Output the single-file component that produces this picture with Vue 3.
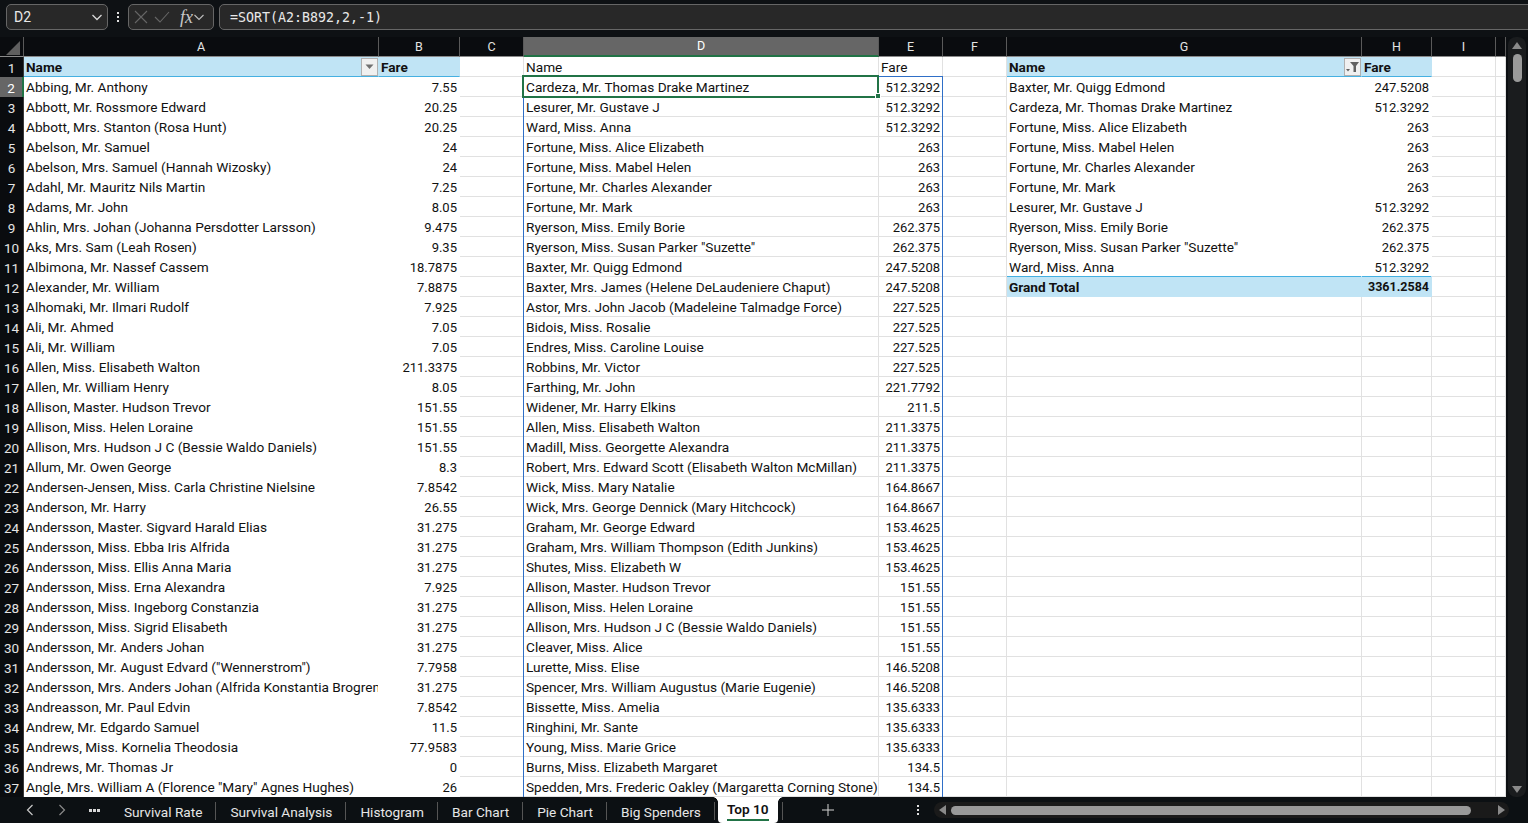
<script setup>
const columns = [
  { key: 'A', w: 355 }, { key: 'B', w: 81 }, { key: 'C', w: 64 }, { key: 'D', w: 355, active: true },
  { key: 'E', w: 64 }, { key: 'F', w: 64 }, { key: 'G', w: 355 }, { key: 'H', w: 70 }, { key: 'I', w: 64 }, { key: '', w: 10 },
]
const gridCols = '24px ' + columns.map(c => c.w + 'px').join(' ')

const source = [
  ['Abbing, Mr. Anthony', '7.55'], ['Abbott, Mr. Rossmore Edward', '20.25'], ['Abbott, Mrs. Stanton (Rosa Hunt)', '20.25'],
  ['Abelson, Mr. Samuel', '24'], ['Abelson, Mrs. Samuel (Hannah Wizosky)', '24'], ['Adahl, Mr. Mauritz Nils Martin', '7.25'],
  ['Adams, Mr. John', '8.05'], ['Ahlin, Mrs. Johan (Johanna Persdotter Larsson)', '9.475'], ['Aks, Mrs. Sam (Leah Rosen)', '9.35'],
  ['Albimona, Mr. Nassef Cassem', '18.7875'], ['Alexander, Mr. William', '7.8875'], ['Alhomaki, Mr. Ilmari Rudolf', '7.925'],
  ['Ali, Mr. Ahmed', '7.05'], ['Ali, Mr. William', '7.05'], ['Allen, Miss. Elisabeth Walton', '211.3375'],
  ['Allen, Mr. William Henry', '8.05'], ['Allison, Master. Hudson Trevor', '151.55'], ['Allison, Miss. Helen Loraine', '151.55'],
  ['Allison, Mrs. Hudson J C (Bessie Waldo Daniels)', '151.55'], ['Allum, Mr. Owen George', '8.3'],
  ['Andersen-Jensen, Miss. Carla Christine Nielsine', '7.8542'], ['Anderson, Mr. Harry', '26.55'],
  ['Andersson, Master. Sigvard Harald Elias', '31.275'], ['Andersson, Miss. Ebba Iris Alfrida', '31.275'],
  ['Andersson, Miss. Ellis Anna Maria', '31.275'], ['Andersson, Miss. Erna Alexandra', '7.925'],
  ['Andersson, Miss. Ingeborg Constanzia', '31.275'], ['Andersson, Miss. Sigrid Elisabeth', '31.275'],
  ['Andersson, Mr. Anders Johan', '31.275'], ['Andersson, Mr. August Edvard ("Wennerstrom")', '7.7958'],
  ['Andersson, Mrs. Anders Johan (Alfrida Konstantia Brogren)', '31.275'], ['Andreasson, Mr. Paul Edvin', '7.8542'],
  ['Andrew, Mr. Edgardo Samuel', '11.5'], ['Andrews, Miss. Kornelia Theodosia', '77.9583'], ['Andrews, Mr. Thomas Jr', '0'],
  ['Angle, Mrs. William A (Florence "Mary" Agnes Hughes)', '26'],
]
const sorted = [
  ['Cardeza, Mr. Thomas Drake Martinez', '512.3292'], ['Lesurer, Mr. Gustave J', '512.3292'], ['Ward, Miss. Anna', '512.3292'],
  ['Fortune, Miss. Alice Elizabeth', '263'], ['Fortune, Miss. Mabel Helen', '263'], ['Fortune, Mr. Charles Alexander', '263'],
  ['Fortune, Mr. Mark', '263'], ['Ryerson, Miss. Emily Borie', '262.375'], ['Ryerson, Miss. Susan Parker "Suzette"', '262.375'],
  ['Baxter, Mr. Quigg Edmond', '247.5208'], ['Baxter, Mrs. James (Helene DeLaudeniere Chaput)', '247.5208'],
  ['Astor, Mrs. John Jacob (Madeleine Talmadge Force)', '227.525'], ['Bidois, Miss. Rosalie', '227.525'],
  ['Endres, Miss. Caroline Louise', '227.525'], ['Robbins, Mr. Victor', '227.525'], ['Farthing, Mr. John', '221.7792'],
  ['Widener, Mr. Harry Elkins', '211.5'], ['Allen, Miss. Elisabeth Walton', '211.3375'], ['Madill, Miss. Georgette Alexandra', '211.3375'],
  ['Robert, Mrs. Edward Scott (Elisabeth Walton McMillan)', '211.3375'], ['Wick, Miss. Mary Natalie', '164.8667'],
  ['Wick, Mrs. George Dennick (Mary Hitchcock)', '164.8667'], ['Graham, Mr. George Edward', '153.4625'],
  ['Graham, Mrs. William Thompson (Edith Junkins)', '153.4625'], ['Shutes, Miss. Elizabeth W', '153.4625'],
  ['Allison, Master. Hudson Trevor', '151.55'], ['Allison, Miss. Helen Loraine', '151.55'],
  ['Allison, Mrs. Hudson J C (Bessie Waldo Daniels)', '151.55'], ['Cleaver, Miss. Alice', '151.55'], ['Lurette, Miss. Elise', '146.5208'],
  ['Spencer, Mrs. William Augustus (Marie Eugenie)', '146.5208'], ['Bissette, Miss. Amelia', '135.6333'], ['Ringhini, Mr. Sante', '135.6333'],
  ['Young, Miss. Marie Grice', '135.6333'], ['Burns, Miss. Elizabeth Margaret', '134.5'],
  ['Spedden, Mrs. Frederic Oakley (Margaretta Corning Stone)', '134.5'],
]
const pivot = [
  ['Baxter, Mr. Quigg Edmond', '247.5208'], ['Cardeza, Mr. Thomas Drake Martinez', '512.3292'], ['Fortune, Miss. Alice Elizabeth', '263'],
  ['Fortune, Miss. Mabel Helen', '263'], ['Fortune, Mr. Charles Alexander', '263'], ['Fortune, Mr. Mark', '263'],
  ['Lesurer, Mr. Gustave J', '512.3292'], ['Ryerson, Miss. Emily Borie', '262.375'], ['Ryerson, Miss. Susan Parker "Suzette"', '262.375'],
  ['Ward, Miss. Anna', '512.3292'],
]
const rowNumbers = Array.from({ length: 37 }, (_, i) => i + 1)
const tabs = ['Survival Rate', 'Survival Analysis', 'Histogram', 'Bar Chart', 'Pie Chart', 'Big Spenders']
</script>

<template>
  <div class="app">
    <div class="formula-bar">
      <div class="name-box">
        <span>D2</span>
        <svg width="12" height="12" viewBox="0 0 12 12"><path d="M1.500 4l4.500 4.500L10.500 4" fill="none" stroke="#d8d8d8" stroke-width="1.3" /></svg>
      </div>
      <div class="vdots"><i></i><i></i><i></i></div>
      <div class="fx-box">
        <svg width="14" height="14" viewBox="0 0 14 14"><path d="M1 1l12 12M13 1L1 13" fill="none" stroke="#666" stroke-width="1.1" /></svg>
        <svg width="16" height="14" viewBox="0 0 16 14"><path d="M1 7l5 5L15 2" fill="none" stroke="#666" stroke-width="1.1" /></svg>
        <span class="fx">fx</span>
        <svg width="10" height="10" viewBox="0 0 10 10"><path d="M0.500 3l4.500 4.500L9.500 3" fill="none" stroke="#bdbdbd" stroke-width="1.1" /></svg>
      </div>
      <div class="formula-box">=SORT(A2:B892,2,-1)</div>
    </div>

    <div class="middle">
      <div class="sheet" :style="{ gridTemplateColumns: gridCols }">
        <!-- column headers -->
        <div class="corner"><span class="corner-tri"></span></div>
        <div v-for="c in columns" :key="c.key" class="col-head" :class="{ active: c.active }">{{ c.key }}</div>

        <template v-for="n in rowNumbers" :key="n">
          <div class="row-head" :class="{ active: n === 2 }">{{ n }}</div>

          <!-- A:B source table -->
          <template v-if="n === 1">
            <div class="cell band bold"><span class="grow">Name</span>
              <span class="filter"><svg width="9" height="6" viewBox="0 0 9 6"><path d="M0.500 0.500h8L4.500 5z" fill="#707070" /></svg></span>
            </div>
            <div class="cell band bold">Fare</div>
          </template>
          <template v-else>
            <div class="cell plain">{{ source[n - 2][0] }}</div>
            <div class="cell plain num">{{ source[n - 2][1] }}</div>
          </template>

          <div class="cell"></div>

          <!-- D:E spilled SORT -->
          <template v-if="n === 1">
            <div class="cell">Name</div>
            <div class="cell">Fare</div>
          </template>
          <template v-else>
            <div class="cell">{{ sorted[n - 2][0] }}</div>
            <div class="cell num">{{ sorted[n - 2][1] }}</div>
          </template>

          <div class="cell"></div>

          <!-- G:H pivot -->
          <template v-if="n === 1">
            <div class="cell band bold"><span class="grow">Name</span>
              <span class="filter">
                <svg width="14" height="12" viewBox="0 0 14 12"><path d="M4 1h9L10 5v6H7.500V5z" fill="#606060" /><path d="M0 8h4L2 10.500z" fill="#606060" /></svg>
              </span>
            </div>
            <div class="cell band bold">Fare</div>
          </template>
          <template v-else-if="n <= 11">
            <div class="cell plain">{{ pivot[n - 2][0] }}</div>
            <div class="cell plain num">{{ pivot[n - 2][1] }}</div>
          </template>
          <template v-else-if="n === 12">
            <div class="cell total bold">Grand Total</div>
            <div class="cell total bold num">3361.2584</div>
          </template>
          <template v-else>
            <div class="cell"></div>
            <div class="cell"></div>
          </template>

          <div class="cell"></div>
          <div class="cell"></div>
        </template>

        <!-- overlays, anchored to their grid areas -->
        <div class="spill"></div>
        <div class="selection"><span class="handle"></span></div>
      </div>

      <div class="v-scroll">
        <svg width="10" height="7" viewBox="0 0 10 7"><path d="M5 0l5 7H0z" fill="#8a8a8a" /></svg>
        <div class="v-thumb"></div>
        <svg class="v-down" width="10" height="7" viewBox="0 0 10 7"><path d="M5 7L0 0h10z" fill="#8a8a8a" /></svg>
      </div>
    </div>

    <div class="tab-bar">
      <div class="nav">
        <svg width="10" height="12" viewBox="0 0 10 12"><path d="M7.500 1L2.500 6l5 5" fill="none" stroke="#c8c8c8" stroke-width="1.2" /></svg>
        <svg width="10" height="12" viewBox="0 0 10 12"><path d="M2.500 1l5 5-5 5" fill="none" stroke="#8a8a8a" stroke-width="1.2" /></svg>
        <div class="hdots"><i></i><i></i><i></i></div>
      </div>
      <div class="tabs">
        <div v-for="t in tabs" :key="t" class="tab">{{ t }}</div>
        <div class="tab active"><span>Top 10</span></div>
        <div class="tab-sep"></div>
      </div>
      <div class="plus">
        <svg width="12" height="12" viewBox="0 0 12 12"><path d="M6 0v12M0 6h12" stroke="#d4d4d4" stroke-width="1" /></svg>
      </div>
      <div class="vdots small"><i></i><i></i><i></i></div>
      <div class="h-scroll">
        <svg width="7" height="10" viewBox="0 0 7 10"><path d="M0 5l7-5v10z" fill="#8a8a8a" /></svg>
        <div class="h-thumb"></div>
        <svg width="7" height="10" viewBox="0 0 7 10"><path d="M7 5L0 10V0z" fill="#8a8a8a" /></svg>
      </div>
    </div>
  </div>
</template>

<style>
html, body {
  margin: 0;
  background: #0c0f12;
  overflow: hidden;
}
</style>

<style scoped>
.app {
  width: 1528px;
  height: 823px;
  display: flex;
  flex-direction: column;
  overflow: hidden;
  background: #0c0f12;
  font-family: Roboto, "Liberation Sans", sans-serif;
  font-size: 13.65px;
  color: #111;
}

/* formula bar */
.formula-bar {
  height: 37px;
  flex-shrink: 0;
  box-sizing: border-box;
  padding: 4px 0 7px 6px;
  display: flex;
  align-items: stretch;
  background: #0e1114;
  color: #e8e8e8;
}
.name-box,
.fx-box,
.formula-box {
  box-sizing: border-box;
  border: 1px solid #666;
  border-radius: 5px;
  background: #282828;
  display: flex;
  align-items: center;
}
.name-box {
  width: 102px;
  padding: 0 4px 0 7px;
  justify-content: space-between;
  font-size: 14px;
}
.vdots {
  width: 20px;
  display: flex;
  flex-direction: column;
  align-items: center;
  justify-content: center;
  gap: 2px;
}
.vdots i {
  width: 2px;
  height: 2px;
  background: #e0e0e0;
}
.fx-box {
  width: 86px;
  padding: 0 2px 0 5px;
  gap: 6px;
}
.fx {
  font-family: "Liberation Serif", serif;
  font-style: italic;
  font-size: 18px;
  color: #c8c8c8;
  margin-left: 4px;
  margin-right: -5px;
}
.formula-box {
  flex: 1;
  margin-left: 5px;
  margin-right: -8px;
  padding-left: 10px;
  font-family: "DejaVu Sans Mono", monospace;
  font-size: 13.3px;
}

/* sheet */
.middle {
  flex: 1;
  display: flex;
  min-height: 0;
}
.sheet {
  position: relative;
  width: 1506px;
  height: 760px;
  flex-shrink: 0;
  display: grid;
  grid-auto-rows: 20px;
  overflow: hidden;
  background: #fff;
}
.corner,
.col-head,
.row-head {
  background: #0a0c0f;
  color: #e4e4e4;
  font-size: 12.500px;
  display: flex;
  align-items: center;
  justify-content: center;
  box-sizing: border-box;
}
.corner {
  border-right: 1px solid #5a5a5a;
  border-bottom: 1px solid #8a8a8a;
}
.corner-tri {
  width: 0;
  height: 0;
  margin: 2px 0 0 2px;
  border-left: 14px solid transparent;
  border-bottom: 14px solid #5f5f5f;
}
.col-head {
  border-right: 1px solid #5a5a5a;
  border-bottom: 1px solid #8a8a8a;
  padding-bottom: 1px;
}
.col-head.active {
  background: #666;
  color: #fff;
  border-bottom: 2px solid #217346;
}
.row-head {
  font-size: 13.500px;
  border-right: 1px solid #3a3a3a;
  padding-top: 1px;
}
.row-head.active {
  background: #666;
  color: #fff;
  border-right: 2px solid #217346;
}
.cell {
  box-sizing: border-box;
  border-right: 1px solid #e1e1e1;
  border-bottom: 1px solid #e1e1e1;
  padding: 1px 2px 0;
  display: flex;
  align-items: center;
  white-space: nowrap;
  overflow: hidden;
  min-width: 0;
  line-height: 18px;
}
.num {
  justify-content: flex-end;
  font-size: 13px;
  padding-top: 2px;
}
.bold {
  font-weight: 700;
}
.grow {
  flex: 1;
}
.plain {
  border-color: #fff;
}
.band {
  background: #c0e4f5;
  border-right-color: #c0e4f5;
  border-bottom-color: #45b0e1;
}
.total {
  background: #c0e4f5;
  border-right-color: #c0e4f5;
  border-bottom-color: #c0e4f5;
  box-shadow: inset 0 1px 0 #45b0e1;
  margin-top: -1px;
  height: 21px;
  padding-top: 2px;
}
.total.num {
  font-size: 12.500px;
}
.filter {
  width: 17px;
  height: 18px;
  margin-top: -1px;
  box-sizing: border-box;
  border: 1px solid #b0b0b0;
  background: #f0f0f0;
  display: flex;
  align-items: center;
  justify-content: center;
  flex-shrink: 0;
  margin-right: -2px;
}
.spill {
  position: absolute;
  grid-column: 5 / 7;
  grid-row: 3 / 39;
  inset: -1px 0 0 -1px;
  border: 1px solid #2f6fc7;
  border-bottom: 0;
  pointer-events: none;
}
.selection {
  position: absolute;
  grid-column: 5 / 6;
  grid-row: 3 / 4;
  inset: -2px 0 -1px -2px;
  border: 2px solid #217346;
  pointer-events: none;
}
.handle {
  position: absolute;
  right: -4px;
  bottom: -3px;
  width: 4px;
  height: 4px;
  background: #217346;
  border: 1px solid #fff;
}

/* vertical scrollbar */
.v-scroll {
  width: 18px;
  margin-left: 2px;
  box-sizing: border-box;
  background: #1a1c1e;
  border-radius: 8px;
  display: flex;
  flex-direction: column;
  align-items: center;
  padding: 5px 0 4px;
}
.v-thumb {
  width: 9px;
  height: 28px;
  margin-top: 5px;
  background: #9a9a9a;
  border-radius: 5px;
}
.v-down {
  margin-top: auto;
}

/* tabs */
.tab-bar {
  height: 26px;
  flex-shrink: 0;
  display: flex;
  align-items: center;
  background: #0c1013;
  color: #e6e6e6;
}
.nav {
  width: 110px;
  flex-shrink: 0;
  display: flex;
  align-items: center;
  padding-left: 25px;
  box-sizing: border-box;
  gap: 22px;
}
.hdots {
  display: flex;
  gap: 1px;
}
.hdots i {
  width: 3px;
  height: 3px;
  background: #d8d8d8;
}
.tabs {
  display: flex;
  align-items: stretch;
  height: 26px;
}
.tab {
  padding: 0 14px;
  display: flex;
  align-items: center;
  position: relative;
  padding-top: 4px;
  box-sizing: border-box;
}
.tab:not(.active)::after {
  content: '';
  position: absolute;
  right: 0;
  top: 5px;
  bottom: 3px;
  width: 1px;
  background: #555;
}
.tab.active {
  background: #fff;
  color: #111;
  font-weight: 600;
  font-size: 13.65px;
  padding: 0 9px;
  margin-left: 3px;
  border-radius: 0 0 4px 4px;
  align-items: flex-start;
}
.tab.active::before,
.tab.active::after {
  content: '';
  position: absolute;
  top: 0;
  width: 5px;
  height: 5px;
}
.tab.active::before {
  left: -5px;
  background: radial-gradient(circle at 0 100%, transparent 4.500px, #fff 5px);
}
.tab.active::after {
  right: -5px;
  background: radial-gradient(circle at 100% 100%, transparent 4.500px, #fff 5px);
}
.tab.active span {
  height: 24px;
  line-height: 24px;
  box-sizing: border-box;
  border-bottom: 2px solid #217346;
}
.tab-sep {
  width: 1px;
  margin: 5px 0 3px 4px;
  background: #555;
}
.plus {
  width: 90px;
  flex-shrink: 0;
  display: flex;
  justify-content: center;
}
.vdots.small {
  width: 20px;
  margin-left: 35px;
  flex-shrink: 0;
}
.h-scroll {
  width: 575px;
  height: 16px;
  margin-left: 6px;
  flex-shrink: 0;
  box-sizing: border-box;
  padding: 0 4px 0 5px;
  border-radius: 8px;
  background: #1a1a1a;
  display: flex;
  align-items: center;
  gap: 3px;
}
.h-thumb {
  width: 520px;
  height: 9px;
  margin-right: auto;
  margin-left: 2px;
  background: #999;
  border-radius: 5px;
}
</style>
